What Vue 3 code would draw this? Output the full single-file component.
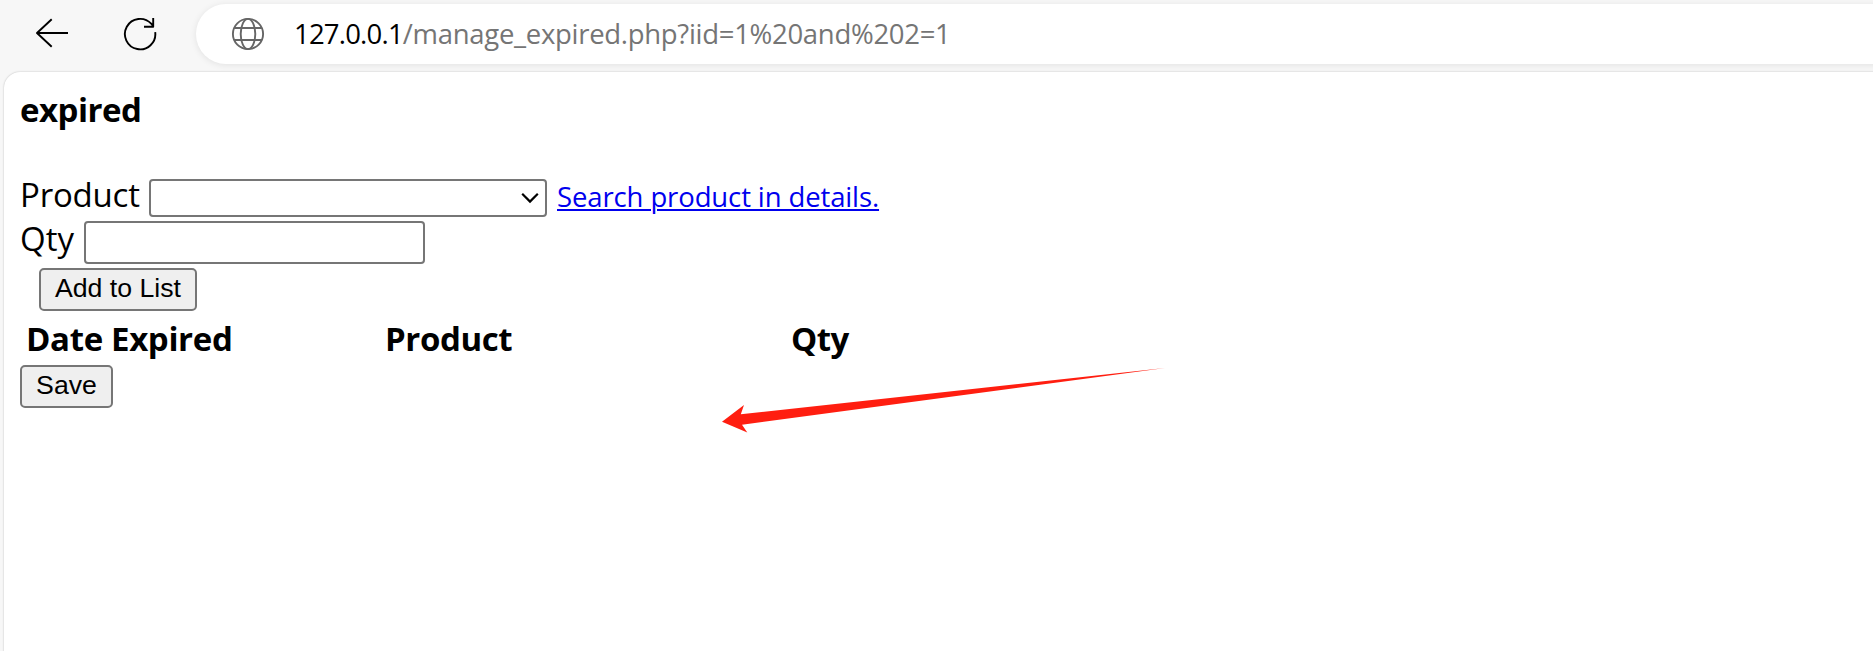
<script setup>
const url = { host: '127.0.0.1', path: '/manage_expired.php?iid=1%20and%202=1' }
</script>

<template>
  <div class="browser">
    <header class="toolbar">
      <svg class="icon back" width="34" height="30" viewBox="0 0 34 30">
        <path d="M33 15H2M16.7 1.2L2 15L16.7 28.8" />
      </svg>
      <svg class="icon reload" width="34" height="34" viewBox="0 0 34 34">
        <path d="M32.2 15.2A15.2 15.2 0 1 1 28.2 6.7L30.3 9.2M30.2 1V9.8H21" />
      </svg>
      <div class="address">
        <svg class="globe" width="34" height="34" viewBox="0 0 34 34">
          <circle cx="17" cy="17" r="15.1" />
          <ellipse cx="17" cy="17" rx="7.3" ry="15.1" />
          <path d="M3.2 11H30.8M3.2 23H30.8" />
        </svg>
        <div class="url"><span class="host">{{ url.host }}</span><span class="path">{{ url.path }}</span></div>
      </div>
    </header>

    <main class="page">
      <h4 class="title">expired</h4>
      <div class="row product-row">
        <label class="label">Product</label>
        <div class="select">
          <svg width="18" height="12" viewBox="0 0 18 12"><path d="M1.2 1.8L9 9.6L16.8 1.8" /></svg>
        </div>
        <a class="link">Search product in details.</a>
      </div>
      <div class="row qty-row">
        <label class="label">Qty</label>
        <div class="input"></div>
      </div>
      <button class="btn add">Add to List</button>
      <div class="head">
        <b class="date">Date Expired</b>
        <b class="prod">Product</b>
        <b class="qty">Qty</b>
      </div>
      <button class="btn save">Save</button>
    </main>

    <svg class="arrow" width="446" height="68" viewBox="720 366 446 68">
      <path d="M722 421.7L744 405L740.8 414.2L1165 368L742 424.7L747.3 432.4Z" />
    </svg>
  </div>
</template>

<style>
html, body { margin: 0; overflow: hidden; background: #f7f7f7; }
</style>

<style scoped>
.browser {
  position: relative;
  width: 1873px;
  height: 651px;
  overflow: hidden;
  background: #f7f7f7;
  color: #000;
  font-family: "Open Sans", "Noto Sans", sans-serif;
}
.toolbar { display: flex; height: 72px; align-items: flex-start; }
svg { display: block; flex: none; }
.icon path { fill: none; stroke: #000; stroke-width: 1.9; stroke-linejoin: round; }
.back { margin: 18px 0 0 35px; }
.reload { margin: 17px 0 0 54px; }
.address {
  display: flex;
  flex: none;
  box-sizing: border-box;
  width: 1720px;
  height: 60px;
  margin: 4px 0 0 39px;
  padding: 0 0 0 35px;
  border-radius: 30px;
  background: #fff;
  box-shadow: 0 1px 7px rgba(0, 0, 0, 0.09);
}
.globe { margin-top: 13px; fill: none; stroke: #666; stroke-width: 1.9; }
.url { margin-left: 29px; font-size: 27.5px; line-height: 60px; white-space: nowrap; }
.host { letter-spacing: -0.8px; }
.path { color: #757575; letter-spacing: -0.3px; }
.page {
  box-sizing: border-box;
  width: 1900px;
  height: 600px;
  margin-left: 4px;
  padding: 16px 0 0 16px;
  border-radius: 16px 0 0 0;
  background: #fff;
  box-shadow: 0 0 2px rgba(0, 0, 0, 0.25);
}
.title { margin: 0 0 47px; font-size: 33px; line-height: 44px; letter-spacing: -0.5px; }
.row { display: flex; align-items: flex-start; }
.label { font-size: 33px; white-space: nowrap; }
.product-row { height: 42px; }
.product-row .label { width: 129px; line-height: 32px; letter-spacing: -0.2px; }
.select {
  display: flex;
  box-sizing: border-box;
  width: 398px;
  height: 38px;
  padding-right: 6px;
  align-items: center;
  justify-content: flex-end;
  border: 2px solid #767676;
  border-radius: 4px;
}
.select path { fill: none; stroke: #000; stroke-width: 2.2; }
.link {
  margin-left: 10px;
  color: #00e;
  font-size: 27.5px;
  line-height: 36px;
  letter-spacing: -0.12px;
  text-decoration: underline;
  text-decoration-thickness: 2px;
  text-underline-offset: 2px;
  white-space: nowrap;
}
.qty-row { height: 47px; }
.qty-row .label { width: 64px; line-height: 36px; }
.input {
  box-sizing: border-box;
  width: 341px;
  height: 43px;
  border: 2px solid #767676;
  border-radius: 4px;
}
.btn {
  display: block;
  box-sizing: border-box;
  height: 43px;
  padding: 0 0 2px;
  border: 2px solid #767676;
  border-radius: 5px;
  background: #efefef;
  color: #000;
  font: 26.67px/37px "Liberation Sans", Arial, sans-serif;
}
.add { width: 158px; margin-left: 19px; }
.save { width: 93px; }
.head { display: flex; height: 54px; font-size: 33px; line-height: 56px; white-space: nowrap; }
.date { width: 359px; padding-left: 6px; box-sizing: content-box; letter-spacing: -0.35px; }
.prod { width: 406px; letter-spacing: -0.4px; }
.qty { letter-spacing: -0.6px; }
.arrow { position: absolute; left: 720px; top: 366px; fill: #ff1e10; }
</style>
